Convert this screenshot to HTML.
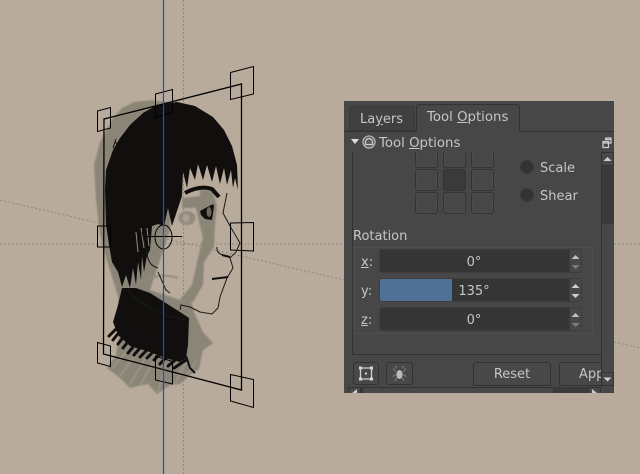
<!DOCTYPE html>
<html><head><meta charset="utf-8"><style>
html,body{margin:0;padding:0;background:#b9ab9b;}
#root{position:relative;width:640px;height:474px;overflow:hidden;background:#b9ab9b;font-family:"DejaVu Sans",sans-serif;font-size:13px;color:#c6c6c6;}
#root>svg{position:absolute;left:0;top:0;}
#p{position:absolute;left:344px;top:101px;width:270px;height:292px;background:#474747;overflow:hidden;}
#p div{position:absolute;box-sizing:border-box;}
.t{white-space:nowrap;line-height:16px;}
.g{width:23px;height:22px;background:#474747;border:1px solid #333;border-radius:3px;box-shadow:inset 0 0 0 1px #4c4c4c;}
.r{width:14px;height:14px;border-radius:50%;background:#333;border:1px solid #3a3a3a;}
.s{left:35px;width:203px;height:24px;background:#353535;border:1px solid #3d3d3d;border-radius:3px;text-align:center;line-height:25px;padding-right:13px;}
.st{left:225px;width:13px;height:24px;background:#474747;border:1px solid #3d3d3d;border-radius:0 3px 3px 0;}
.b{border:1px solid #333;border-radius:3px;background:#484848;text-align:center;}
</style></head><body><div id="root">
<svg width="640" height="474" viewBox="0 0 640 474">
<defs><filter id="bl"><feGaussianBlur stdDeviation="0.7"/></filter></defs>
<g fill="none" stroke="#8f8779" stroke-width="1" stroke-dasharray="2 2">
<path d="M0 244H344"/><path d="M183.500 0V474"/><path d="M0 200L344 280M614 342L640 348"/><path d="M614 244H640"/>
</g>
<!-- grey shadow layer -->
<g filter="url(#bl)">
<path fill="#8b8578" d="M113 118L122 108L134 102L152 100L180 104L170 230L150 290L192 304L194 312L203 332L213 343L203 350L199 369L190 375L180 384L170 385L157 394L148 384L130 388L120 378L107 368L116 355L120 330L118 296L108 264L100 235L96 200L94 165L100 142Z"/>
<path fill="#8b8578" d="M182 198L200 196L200 190L212 190L217 205L215 226L214 247L204 262L203 285L193 302L183 308L176 304L192 285L197 262L203 238L199 222L196 208L182 208Z"/>
<g stroke="#b9ab9b" stroke-width="1" fill="none" opacity=".6"><path d="M112 368L126 352M120 376L136 354M130 384L146 358M140 386L154 360M158 392L166 364M176 382L186 362M186 376L197 360"/></g>
<ellipse cx="187" cy="218" rx="8.500" ry="7" fill="#918b7f"/><ellipse cx="186" cy="218" rx="3.500" ry="4" fill="#a9a094"/>
<path fill="none" stroke="#918b7f" stroke-width="2" d="M147 279Q163 273 178 278"/>
</g>
<!-- collar -->
<path fill="#100f0e" d="M122 288L136 288L150 293L180 312L189 318L188 345L186 358L180 362L165 358L150 352L130 346L118 335L113 322L118 305Z"/>
<path fill="none" stroke="#1d1c1a" stroke-width="1" d="M128 290Q145 312 185 320"/>
<g stroke="#100f0e" stroke-width="3" stroke-linecap="round" fill="none">
<path d="M109 336L118 327M113 340L124 326M118 344L128 331M123 348L134 334M128 353L139 340M134 355L145 342M140 357L151 346M147 358L157 348M154 360L163 351M160 364L170 353M168 366L180 356M174 368L186 360"/></g>
<path fill="none" stroke="#100f0e" stroke-width="2" d="M186 356L190 368L195 373"/>
<!-- hair -->
<path fill="#100f0e" d="M157 105L177 102L195 106L213 117L224 130L232 146L237 165L238 190L235 178L233 188L231 170L227 185L224 168L220 184L216 166L212 182L207 165L203 180L198 164L195 180L190 168L187 188L183 172L182 196L178 208L172 226L168 208L164 226L158 224L152 226L150 250L147 256L144 272L142 256L141 280L138 262L136 285L133 268L130 288L126 275L122 287L118 272L112 262L109 245L106 225L105 190L106 170L113 150L120 138L130 125L143 113Z"/>
<path fill="none" stroke="#b9ab9b" stroke-width="1" opacity=".8" d="M136 232L138 252M141 228L144 248M147 228L149 246"/>
<path fill="none" stroke="#100f0e" stroke-width="1" d="M113 148L116 139M115 142L120 146"/>
<!-- face lines -->
<path fill="none" stroke="#100f0e" stroke-width="4" stroke-linejoin="round" d="M185 193Q200 185 212 189L219 197"/>
<path fill="#100f0e" d="M200 211L213 204L214 206L212 220L205 219L201 215Z"/>
<ellipse cx="209" cy="212" rx="2.500" ry="5" fill="#6d685e"/>
<g fill="none" stroke="#1a1918" stroke-width="1">
<path d="M227 193L223 213L230 226L240 243L236 252L230 258L233 268L227 278L220 297L218 308L212 314L200 312L190 307L181 305L180 310"/>
<path d="M217 247Q216 253 223 255"/>
<path d="M142 232Q145 245 148 258Q150 266 158 268"/>
<path d="M158 272L166 290L170 293"/>
</g>
<path fill="none" stroke="#100f0e" stroke-width="2" d="M222 255L230 257M212 279L228 277"/>
<!-- transform frame -->
<g fill="none" stroke="#000" stroke-width="1">
<path d="M104 119L241.500 84V390L103.500 354Z" stroke-width="1.300"/>
<path d="M97.500 111L110.500 107.500V128L97.500 131.500ZM155.500 94L172.500 89.500V112.500L155.500 117.500ZM230.500 72.500L253.500 66.500V94L230.500 99.500ZM97.500 226H110.500V247H97.500ZM230.500 223L253.500 222.500V251L230.500 250ZM97.500 342.500L110.500 346V366.500L97.500 363ZM155.500 356L172.500 361.500V384L155.500 380ZM230.500 374.500L253.500 379.500V407.500L230.500 401Z"/>
<ellipse cx="163.500" cy="237" rx="8.500" ry="12"/>
<path d="M146 236.500H182"/>
</g>
<path d="M163.500 0V474" stroke="#0f52cf" stroke-width="1.200"/>
</svg>
<div id="p">
 <div style="left:5px;top:5px;width:66px;height:25px;background:#404040;border:1px solid #383838;border-radius:3px 3px 0 0;"></div>
 <div style="left:0;top:30px;width:270px;height:1px;background:#333;"></div>
 <div style="left:72px;top:3px;width:104px;height:28px;background:#474747;border:1px solid #333;border-bottom:0;border-radius:3px 3px 0 0;"></div>
 <div class="t" style="left:16px;top:11px;">La<u>y</u>ers</div>
 <div class="t" style="left:83px;top:9px;font-size:13.3px;">Tool <u>O</u>ptions</div>

 <div class="g" style="left:71px;top:45px;"></div><div class="g" style="left:99px;top:45px;"></div><div class="g" style="left:127px;top:45px;"></div>
 <div class="g" style="left:71px;top:68px;"></div><div class="g" style="left:99px;top:68px;background:#3a3a3a;box-shadow:none;"></div><div class="g" style="left:127px;top:68px;"></div>
 <div class="g" style="left:71px;top:91px;"></div><div class="g" style="left:99px;top:91px;"></div><div class="g" style="left:127px;top:91px;"></div>
 <div style="left:9px;top:31px;width:248px;height:20px;background:#474747;"></div>

 <div style="left:7px;top:38px;width:0;height:0;border-left:4px solid transparent;border-right:4px solid transparent;border-top:5px solid #ddd;"></div>
 <svg style="position:absolute;left:18px;top:34px" width="14" height="14"><circle cx="7" cy="7" r="6" fill="#5a5a5a" stroke="#b5b5b5" stroke-width="1.300"/><path d="M3.500 7a3.500 3.500 0 1 1 7 0v2.500h-7z" fill="none" stroke="#cfcfcf" stroke-width="1.200"/></svg>
 <div class="t" style="left:35px;top:35px;font-size:13.3px;">Tool <u>O</u>ptions</div>
 <svg style="position:absolute;left:258px;top:36px" width="10" height="12"><path d="M3.500 1H9V6H7M1 4.500H6.500V10.500H1ZM1 6H6.500M3.500 1V3M3.500 2.500H9" fill="none" stroke="#d0d0d0" stroke-width="1.200"/></svg>

 <div style="left:8px;top:51px;width:1px;height:203px;background:#333;"></div>
 <div style="left:8px;top:253px;width:249px;height:1px;background:#333;"></div>

 <div class="r" style="left:176px;top:59px;"></div><div class="t" style="left:196px;top:60px;">Scale</div>
 <div class="r" style="left:176px;top:87px;"></div><div class="t" style="left:196px;top:88px;">Shear</div>
 <div class="t" style="left:9px;top:128px;">Rotation</div>

 <div style="left:10px;top:146px;width:239px;height:87px;border:1px solid #4f4f4f;"></div>
 <div class="t" style="left:17px;top:154px;"><u>x</u>:</div>
 <div class="t" style="left:17px;top:183px;">y:</div>
 <div class="t" style="left:17px;top:212px;"><u>z</u>:</div>
 <div class="s" style="top:148px;">0°</div>
 <div class="s" style="top:177px;"><div style="left:0;top:0;width:72px;height:22px;background:#4f7195;border-radius:2px 0 0 2px;"></div><span style="position:relative">135°</span></div>
 <div class="s" style="top:206px;">0°</div>
 <div class="st" style="top:148px;"><svg width="11" height="22" style="display:block"><path d="M1.500 9L5.500 5L9.500 9Z" fill="#c0c0c0"/><path d="M1.500 15H9.500L5.500 19Z" fill="#7c7c7c"/></svg></div>
 <div class="st" style="top:177px;"><svg width="11" height="22" style="display:block"><path d="M1.500 9L5.500 5L9.500 9Z" fill="#d0d0d0"/><path d="M1.500 15H9.500L5.500 19Z" fill="#d0d0d0"/></svg></div>
 <div class="st" style="top:206px;"><svg width="11" height="22" style="display:block"><path d="M1.500 9L5.500 5L9.500 9Z" fill="#c0c0c0"/><path d="M1.500 15H9.500L5.500 19Z" fill="#7c7c7c"/></svg></div>

 <div class="b" style="left:9px;top:261px;width:26px;height:23px;"><svg width="24" height="21" style="display:block"><path d="M6.500 5H17.500V16H6.500Z" fill="none" stroke="#cfcfcf" stroke-width="1.300"/><path d="M5 3.500h3v3h-3zM16 3.500h3v3h-3zM5 14.500h3v3h-3zM16 14.500h3v3h-3zM11 9.500h2v2h-2z" fill="#d8d8d8"/></svg></div>
 <div class="b" style="left:42px;top:261px;width:27px;height:23px;"><svg width="25" height="21" style="display:block"><ellipse cx="12.500" cy="11.500" rx="3" ry="4.500" fill="#bdbdbd"/><path d="M10 5L8 3M15 5L17 3M9.500 9L7 7L7 5M15.500 9L18 7L18 5M9.500 12H7L6 14M15.500 12H18L19 14M10 14L8 18M15 14L17 18" fill="none" stroke="#7a7a7a" stroke-width="1.100"/></svg></div>
 <div class="b" style="left:129px;top:261px;width:78px;height:24px;line-height:24px;">Reset</div>
 <div class="b" style="left:215px;top:261px;width:70px;height:24px;line-height:24px;text-align:left;padding-left:19px;">Apply</div>

 <div style="left:257px;top:51px;width:13px;height:235px;background:#474747;border-left:1px solid #333;"></div>
 <div style="left:257px;top:65px;width:13px;height:58px;background:#3a3a3a;border-left:1px solid #333;"></div>
 <div style="left:257px;top:51px;width:13px;height:14px;background:#484848;border:1px solid #333;"><svg width="11" height="12" style="display:block"><path d="M1.500 8L5.500 4L9.500 8Z" fill="#d0d0d0"/></svg></div>
 <div style="left:257px;top:271px;width:13px;height:14px;background:#484848;border:1px solid #333;"><svg width="11" height="12" style="display:block"><path d="M1.500 4.500H9.500L5.500 8.500Z" fill="#d0d0d0"/></svg></div>

 <div style="left:4px;top:286px;width:253px;height:6px;background:#3a3a3a;"></div>
 <div style="left:4px;top:286px;width:13px;height:8px;background:#484848;border:1px solid #333;"><svg width="11" height="6" style="display:block"><path d="M3 5L8 1V5Z" fill="#ccc"/></svg></div>
 <div style="left:18px;top:286px;width:192px;height:8px;background:#484848;border:1px solid #333;"></div>
 <div style="left:244px;top:286px;width:13px;height:8px;background:#484848;border:1px solid #333;"><svg width="11" height="6" style="display:block"><path d="M3 1L8 5H3Z" fill="#ccc"/></svg></div>
</div>
</div></body></html>
